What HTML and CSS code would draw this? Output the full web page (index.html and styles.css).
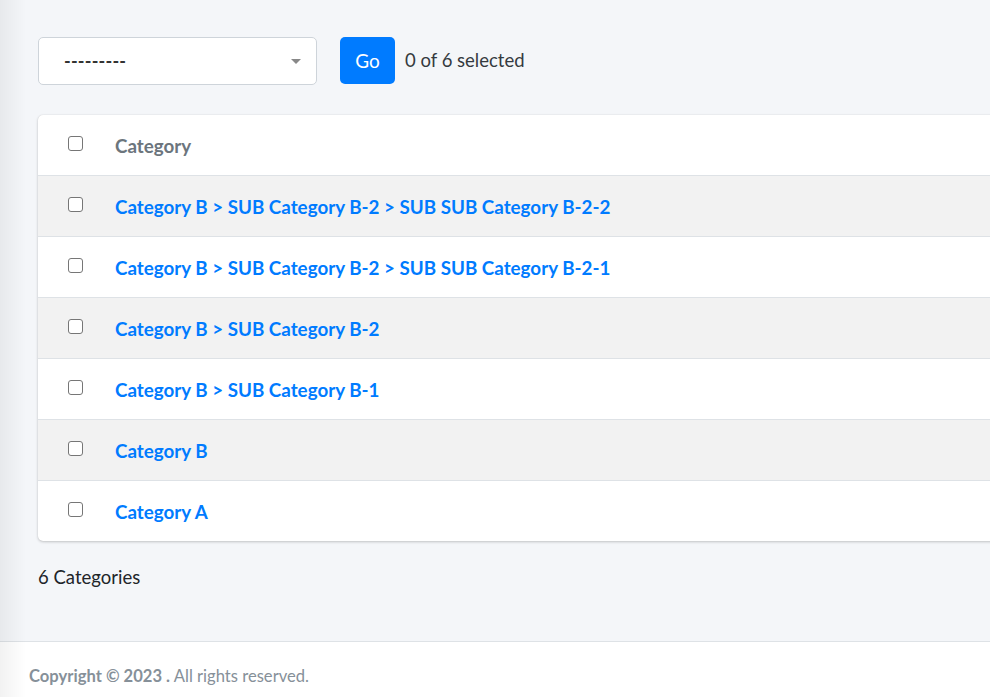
FILE: index.html
```html
<!DOCTYPE html>
<html>
<head>
<meta charset="utf-8">
<link rel="stylesheet" href="styles.css">
</head>
<body>
<div class="shade"></div>
<main class="content">
  <div class="actions">
    <div class="select">
      <span class="select-text">---------</span>
      <span class="caret"></span>
    </div>
    <button class="go">Go</button>
    <span class="counter">0 of 6 selected</span>
  </div>
  <div class="card">
    <div class="row head">
      <span class="cb-cell"><input type="checkbox" class="cb"></span>
      <span class="th">Category</span>
    </div>
    <div class="row odd"><span class="cb-cell"><input type="checkbox" class="cb"></span><a class="link">Category B &gt; SUB Category B-2 &gt; SUB SUB Category B-2-2</a></div>
    <div class="row"><span class="cb-cell"><input type="checkbox" class="cb"></span><a class="link">Category B &gt; SUB Category B-2 &gt; SUB SUB Category B-2-1</a></div>
    <div class="row odd"><span class="cb-cell"><input type="checkbox" class="cb"></span><a class="link">Category B &gt; SUB Category B-2</a></div>
    <div class="row"><span class="cb-cell"><input type="checkbox" class="cb"></span><a class="link">Category B &gt; SUB Category B-1</a></div>
    <div class="row odd"><span class="cb-cell"><input type="checkbox" class="cb"></span><a class="link">Category B</a></div>
    <div class="row last"><span class="cb-cell"><input type="checkbox" class="cb"></span><a class="link">Category A</a></div>
  </div>
  <p class="total">6 Categories</p>
</main>
<footer class="footer"><strong>Copyright © 2023 .</strong> All rights reserved.</footer>
</body>
</html>
```
FILE: styles.css
```css
html, body {
  margin: 0;
  padding: 0;
}
body {
  background: #f4f6f9;
  font-family: Lato, "Source Sans Pro", sans-serif;
  font-size: 18.5px;
  color: #212529;
  overflow: hidden;
  height: 697px;
  display: flex;
  flex-direction: column;
}
.shade {
  position: fixed;
  left: 0;
  top: 0;
  bottom: 0;
  width: 26px;
  background: linear-gradient(to right, rgba(0,0,0,0.05), rgba(0,0,0,0));
  pointer-events: none;
  z-index: 5;
}
.content {
  padding: 37px 0 0 38px;
  margin-right: -60px;
  flex: 1;
}
.actions {
  display: flex;
  align-items: flex-start;
  height: 48px;
}
.select {
  box-sizing: border-box;
  width: 279px;
  height: 48px;
  border: 1px solid #ced4da;
  border-radius: 5px;
  background: #fff;
  display: flex;
  align-items: center;
  justify-content: space-between;
  padding: 0 15px 0 25px;
}
.select-text {
  color: #333;
  font-size: 18px;
  font-weight: 700;
  letter-spacing: 0.2px;
}
.caret {
  width: 0;
  height: 0;
  border-left: 5px solid transparent;
  border-right: 5px solid transparent;
  border-top: 5px solid #888;
}
.go {
  margin-left: 23px;
  width: 55px;
  height: 47px;
  border: none;
  border-radius: 5px;
  background: #007bff;
  color: #fff;
  font-family: inherit;
  font-size: 19px;
  padding: 0;
}
.counter {
  margin-left: 10px;
  color: #343a40;
  line-height: 46px;
}
.card {
  margin-top: 30px;
  background: #fff;
  border-radius: 5px 0 0 5px;
  box-shadow: 0 0 1px rgba(0,0,0,.125), 0 1px 3px rgba(0,0,0,.2);
}
.row {
  display: flex;
  align-items: center;
  height: 60px;
  border-bottom: 1px solid #dee2e6;
  font-size: 18.8px;
}
.row.last {
  border-bottom: none;
}
.row.odd {
  background: #f2f2f2;
}
.cb-cell {
  width: 77px;
  display: flex;
  justify-content: flex-start;
  padding-left: 30px;
  box-sizing: border-box;
  margin-top: -4px;
}
.cb {
  appearance: none;
  -webkit-appearance: none;
  width: 15px;
  height: 15px;
  margin: 0;
  border: 1px solid #767676;
  border-radius: 3px;
  background: #fff;
}
.th {
  font-weight: 700;
  color: #6c757d;
}
.link {
  font-weight: 700;
  color: #007bff;
  text-decoration: none;
}
.total {
  margin: 24px 0 0;
  line-height: 24px;
}
.footer {
  box-sizing: border-box;
  height: 56px;
  border-top: 1px solid #dee2e6;
  background: #fff;
  color: #869099;
  font-size: 16.6px;
  padding: 24px 0 0 29px;
}
.footer strong {
  font-weight: 700;
}
```
